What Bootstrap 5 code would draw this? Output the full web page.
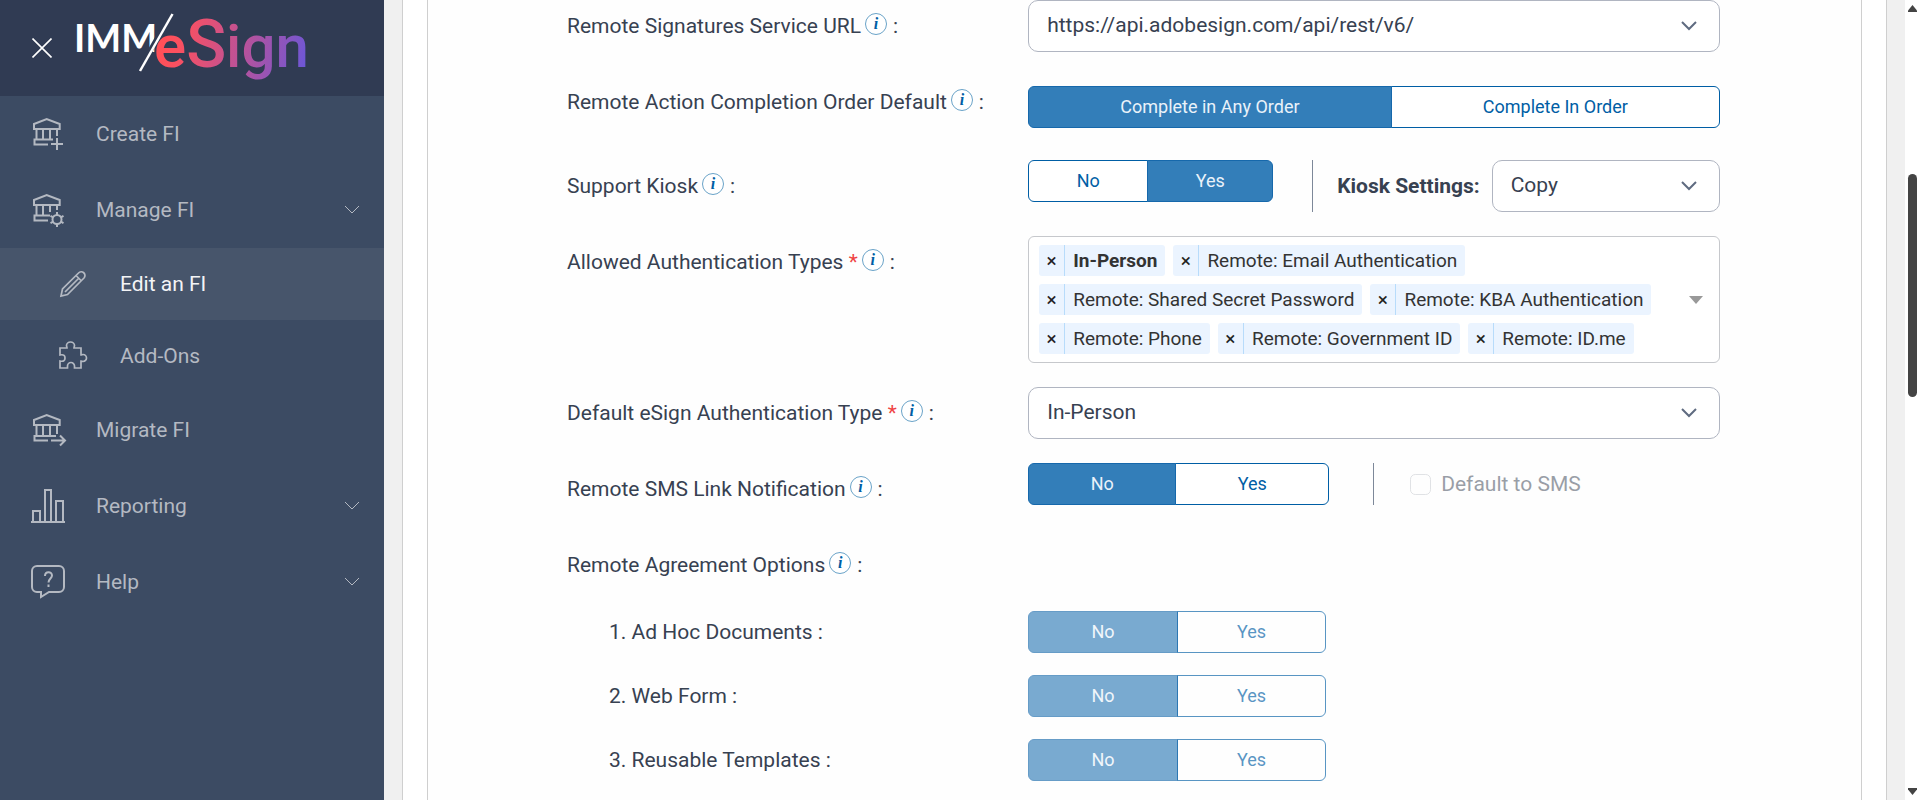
<!DOCTYPE html>
<html lang="en">
<head>
<meta charset="utf-8">
<meta name="viewport" content="width=device-width, initial-scale=1">
<title>IMM/eSign - Edit an FI</title>
<link href="https://cdn.jsdelivr.net/npm/bootstrap@5.3.0/dist/css/bootstrap.min.css" rel="stylesheet">
<style>
  :root { --ink: #374151; --brand: #337eb9; --brand-dark: #005ea5; }
  body { font-family: Roboto, "Liberation Sans", sans-serif; font-size: 21px; line-height: 30px; color: var(--ink); background: #f0f0f0; }

  /* sidebar */
  .side-panel { width: 20%; min-width: 320px; background: #3c4b63; }
  .side-head { height: 96px; background: #303b53; padding-left: 32px; }
  .close-btn { width: 20px; height: 20px; margin-right: 22px; }
  .side-link { height: 76px; padding: 0 24px 0 28px; color: #b4b9c2; text-decoration: none; }
  .side-link.sub-link { height: 72px; padding-left: 56px; }
  .side-link:hover, .side-link.active { color: #f3f4f6; }
  .side-link.active { background: #47556b; }
  .side-link > svg { flex: none; width: 40px; height: 40px; stroke: #b4b9c2; fill: none; stroke-width: 2; }
  .side-link > .nav-name { margin-left: 28px; }
  .side-link.sub-link > svg { width: 32px; height: 32px; }
  .side-link.sub-link > .nav-name { margin-left: 32px; }
  .side-link > svg.caret { width: 16px; height: 10px; margin-left: auto; stroke-width: 1; }

  /* page frames */
  .page-area { padding: 0 18px; min-width: 0; }
  .outer-frame { background: #fff; border: solid #cfcfcf; border-width: 0 1px; padding: 0 24px; }
  .inner-frame { background: #fefefe; border: solid #cfcfcf; border-width: 0 1px; padding: 0 141px 0 139px; }

  /* form rows */
  .form-rows { gap: 24px; }
  .name-col { width: 40%; padding-top: 11px; }
  .field-col { width: 60%; }
  .order-row { margin-bottom: 8px; }
  .order-row .field-col { padding-top: 10px; }
  .options-head { padding: 10px 0 6px; }
  .option-rows { gap: 22px; }
  .option-rows .name-col { padding: 0 0 0 42px; }
  .info-dot { width: 22px; height: 22px; margin: 0 6px 7px 4px; padding: 0; border: 1px solid #6aa3c8; border-radius: 50%; background: #fff; color: var(--brand-dark); font: italic bold 16px/18px "Liberation Serif", serif; vertical-align: middle; }
  .req { color: #ef4444; }

  .form-select { height: 52px; padding: 0 48px 0 18px; font-size: 21px; color: var(--ink); border-color: #b0b5c1; border-radius: 10px; background-color: #fff; background-image: url("data:image/svg+xml,%3Csvg xmlns='http://www.w3.org/2000/svg' viewBox='0 0 18 12'%3E%3Cpath d='M2 2l7 7 7-7' fill='none' stroke='%235f6b80' stroke-width='2'/%3E%3C/svg%3E"); background-size: 18px 12px; background-position: right 21px center; }
  .toggle { height: 42px; }
  .toggle .btn { --bs-btn-color: var(--brand-dark); --bs-btn-border-color: var(--brand-dark); --bs-btn-bg: #fff; --bs-btn-active-bg: var(--brand); --bs-btn-active-border-color: #1668ab; --bs-btn-active-color: #eaf2f9; --bs-btn-disabled-color: var(--brand-dark); --bs-btn-disabled-border-color: var(--brand-dark); --bs-btn-border-radius: 6px; font-size: 18px; line-height: 28px; padding: 6px 12px; }
  .w-kiosk { width: 245px; }
  .w-sms { width: 301px; }
  .w-option { width: 298px; }
  .w-option .btn { flex-basis: 0; }
  .w-option .btn-check:disabled + .btn { opacity: .65; }
  .split-rule { width: 1px; background: #7d8899; }
  .kiosk-rule { margin: 0 24px 0 39px; }
  .sms-rule { margin: 0 36px 0 44px; }

  .tag-box { position: relative; border: 1px solid #c6c8cc; border-radius: 6px; background: #fff; padding: 8px 60px 8px 10px; gap: 8px; }
  .tag { height: 31px; background: #ebf4ff; border-radius: 3px; font-size: 19px; line-height: 31px; color: #333; }
  .tag button { width: 26px; border: 0; border-right: 1px solid #b8dcfb; background: none; padding: 0; color: #222; }
  .tag span { padding: 0 8px; }
  .tag-arrow { position: absolute; right: 16px; top: 50%; margin-top: -4px; width: 14px; height: 8px; fill: #999; }

  .form-check-input { width: 21px; height: 21px; margin: 0 10px 0 0; border-color: #c4c7cd; }

  /* scroll strip */
  .scroll-strip { width: 15px; background: #fff; padding: 5px 0; }
  .scroll-thumb { width: 9px; height: 223px; margin-top: 162px; border-radius: 5px; background: #444; }
</style>
</head>
<body>
<div class="d-flex min-vh-100">

  <aside class="side-panel flex-shrink-0">
    <div class="side-head d-flex align-items-center">
      <button type="button" class="close-btn btn p-0 border-0 d-flex" aria-label="Close menu">
        <svg width="20" height="20" viewBox="0 0 20 20" stroke="#fff" stroke-width="1.6"><path d="M.5.5l19 19M19.5.5l-19 19"/></svg>
      </button>
      <svg width="260" height="96" viewBox="74 0 260 96" role="img" aria-label="IMM/eSign">
        <defs>
          <linearGradient id="brandFade" gradientUnits="userSpaceOnUse" x1="165" y1="30" x2="308" y2="64">
            <stop offset="0" stop-color="#ff5058"/><stop offset=".12" stop-color="#fb5060"/><stop offset=".55" stop-color="#b9529a"/><stop offset="1" stop-color="#6b57d8"/>
          </linearGradient>
        </defs>
        <text x="74" y="52" font-family="Lato, sans-serif" font-weight="700" font-size="38" fill="#fff">IMM</text>
        <text x="154" y="67" font-family="Roboto, sans-serif" font-weight="500" font-size="60" fill="url(#brandFade)">e<tspan font-size="66">S</tspan>ign</text>
        <path d="M171 14L138.500 71" stroke="#303b53" stroke-width="5"/>
        <path d="M172.500 14L140 71" stroke="#fff" stroke-width="2.500"/>
      </svg>
    </div>
    <nav aria-label="Main">
      <a href="#" class="side-link d-flex align-items-center">
        <svg viewBox="28 114 40 40"><path d="M34 129v-5l12.700-5 13 5v5zM36.500 129v10M43 129v10M50 129v10M57 129v7M53 139.500H34.500v5H48M57 138v12M51 144h12"/></svg>
        <span class="nav-name">Create FI</span>
      </a>
      <a href="#" class="side-link d-flex align-items-center">
        <svg viewBox="28 114 40 40"><path d="M34 129v-5l12.700-5 13 5v5zM36.500 129v10M43 129v10M50 129v7M57 129v5M50 139.500H34.500v5H48"/><circle cx="57" cy="143.500" r="4.500"/><path d="M57 139v-3M57 148v3M53.200 141.300l-2.700-1.500M60.800 141.300l2.700-1.500M53.200 145.700l-2.700 1.500M60.800 145.700l2.700 1.500"/></svg>
        <span class="nav-name">Manage FI</span>
        <svg class="caret" viewBox="0 0 16 10"><path d="M1 1l7 7 7-7"/></svg>
      </a>
      <a href="#" class="side-link sub-link active d-flex align-items-center" aria-current="page">
        <svg viewBox="0 0 32 32"><path stroke-width="1.700" d="M5 28l1.500-7L22.500 5a3.500 3.500 0 0 1 5.500 5L11.500 26.500zM20 7.500l5.500 5.500M23 10L9 24"/></svg>
        <span class="nav-name">Edit an FI</span>
      </a>
      <a href="#" class="side-link sub-link d-flex align-items-center">
        <svg viewBox="0 0 32 32"><path stroke-width="1.700" d="M4 8h7c0-1.500-.5-1.500-.5-2.500a4 3.500 0 0 1 8 0c0 1-.5 1-.5 2.500h7v7c1 0 1-.5 2-.5a3.500 3.500 0 0 1 0 7c-1 0-1-.5-2-.5v7h-6.500v-2a3.500 3.500 0 0 0-7 0v2H4v-7c4 1 5-1 5-3s-1-4-5-3z"/></svg>
        <span class="nav-name">Add-Ons</span>
      </a>
      <a href="#" class="side-link d-flex align-items-center">
        <svg viewBox="28 114 40 40"><path d="M34 129v-5l12.700-5 13 5v5zM36.500 129v10M43 129v10M50 129v10M57 129v9M56 140H34.500v4.500H48M51 144.500h14M60 139.500l5 5-5 5"/></svg>
        <span class="nav-name">Migrate FI</span>
      </a>
      <a href="#" class="side-link d-flex align-items-center">
        <svg viewBox="0 0 40 40"><path d="M3 36h34M5 36V25h7v11M17 36V4h6v32M28 36V15h7v21"/></svg>
        <span class="nav-name">Reporting</span>
        <svg class="caret" viewBox="0 0 16 10"><path d="M1 1l7 7 7-7"/></svg>
      </a>
      <a href="#" class="side-link d-flex align-items-center">
        <svg viewBox="0 0 40 40"><path d="M9 4h22a5 5 0 0 1 5 5v16a5 5 0 0 1-5 5H21l-8 5v-5H9a5 5 0 0 1-5-5V9a5 5 0 0 1 5-5zM17 14c0-5 7-5 7-.500 0 3-3.500 3-3.500 7M20.500 22.500v2.500"/></svg>
        <span class="nav-name">Help</span>
        <svg class="caret" viewBox="0 0 16 10"><path d="M1 1l7 7 7-7"/></svg>
      </a>
    </nav>
  </aside>

  <main class="page-area flex-grow-1 d-flex">
    <div class="outer-frame flex-grow-1 d-flex">
      <form class="inner-frame flex-grow-1">
        <div class="form-rows d-flex flex-column">

          <div class="d-flex">
            <div class="name-col"><label for="serviceUrl">Remote Signatures Service URL</label><button type="button" class="info-dot" aria-label="About the service URL">i</button>:</div>
            <div class="field-col"><select id="serviceUrl" class="form-select"><option>https://api.adobesign.com/api/rest/v6/</option></select></div>
          </div>

          <div class="d-flex order-row">
            <div class="name-col"><span id="orderName">Remote Action Completion Order Default</span><button type="button" class="info-dot" aria-label="About completion order">i</button>:</div>
            <div class="field-col">
              <div class="btn-group toggle w-100" role="group" aria-labelledby="orderName">
                <input type="radio" class="btn-check" name="order" id="orderAny" checked><label class="btn" for="orderAny">Complete in Any Order</label>
                <input type="radio" class="btn-check" name="order" id="orderIn"><label class="btn" for="orderIn">Complete In Order</label>
              </div>
            </div>
          </div>

          <div class="d-flex">
            <div class="name-col"><span id="kioskName">Support Kiosk</span><button type="button" class="info-dot" aria-label="About kiosk support">i</button>:</div>
            <div class="field-col d-flex">
              <div class="btn-group toggle w-kiosk flex-shrink-0" role="group" aria-labelledby="kioskName">
                <input type="radio" class="btn-check" name="kiosk" id="kioskNo"><label class="btn" for="kioskNo">No</label>
                <input type="radio" class="btn-check" name="kiosk" id="kioskYes" checked><label class="btn" for="kioskYes">Yes</label>
              </div>
              <div class="split-rule kiosk-rule flex-shrink-0"></div>
              <label for="kioskMode" class="fw-bold text-nowrap align-self-center me-2 pe-1">Kiosk Settings:</label>
              <select id="kioskMode" class="form-select"><option>Copy</option></select>
            </div>
          </div>

          <div class="d-flex">
            <div class="name-col"><span id="authName">Allowed Authentication Types <span class="req">*</span></span><button type="button" class="info-dot" aria-label="About authentication types">i</button>:</div>
            <div class="field-col">
              <div class="tag-box d-flex flex-wrap" role="group" aria-labelledby="authName">
                <div class="tag d-flex"><button type="button" aria-label="Remove In-Person">×</button><span class="fw-bold">In-Person</span></div>
                <div class="tag d-flex"><button type="button" aria-label="Remove Email Authentication">×</button><span>Remote: Email Authentication</span></div>
                <div class="tag d-flex"><button type="button" aria-label="Remove Shared Secret Password">×</button><span>Remote: Shared Secret Password</span></div>
                <div class="tag d-flex"><button type="button" aria-label="Remove KBA Authentication">×</button><span>Remote: KBA Authentication</span></div>
                <div class="tag d-flex"><button type="button" aria-label="Remove Phone">×</button><span>Remote: Phone</span></div>
                <div class="tag d-flex"><button type="button" aria-label="Remove Government ID">×</button><span>Remote: Government ID</span></div>
                <div class="tag d-flex"><button type="button" aria-label="Remove ID.me">×</button><span>Remote: ID.me</span></div>
                <svg class="tag-arrow" viewBox="0 0 14 8"><path d="M0 0h14L7 8z"/></svg>
              </div>
            </div>
          </div>

          <div class="d-flex">
            <div class="name-col"><label for="defaultAuth">Default eSign Authentication Type <span class="req">*</span></label><button type="button" class="info-dot" aria-label="About the default type">i</button>:</div>
            <div class="field-col"><select id="defaultAuth" class="form-select"><option>In-Person</option></select></div>
          </div>

          <div class="d-flex">
            <div class="name-col"><span id="smsName">Remote SMS Link Notification</span><button type="button" class="info-dot" aria-label="About SMS links">i</button>:</div>
            <div class="field-col d-flex">
              <div class="btn-group toggle w-sms flex-shrink-0" role="group" aria-labelledby="smsName">
                <input type="radio" class="btn-check" name="sms" id="smsNo" checked><label class="btn" for="smsNo">No</label>
                <input type="radio" class="btn-check" name="sms" id="smsYes"><label class="btn" for="smsYes">Yes</label>
              </div>
              <div class="split-rule sms-rule flex-shrink-0"></div>
              <div class="d-flex align-items-center">
                <input type="checkbox" class="form-check-input" id="smsDefault" disabled><label class="form-check-label opacity-50" for="smsDefault">Default to SMS</label>
              </div>
            </div>
          </div>

          <div class="options-head">
            <div class="name-col">Remote Agreement Options<button type="button" class="info-dot" aria-label="About agreement options">i</button>:</div>
          </div>
        </div>

        <div class="option-rows d-flex flex-column mt-4">
          <div class="d-flex align-items-center">
            <div class="name-col" id="adHocName">1. Ad Hoc Documents :</div>
            <div class="field-col d-flex"><div class="btn-group toggle w-option" role="group" aria-labelledby="adHocName">
              <input type="radio" class="btn-check" name="adhoc" id="adhocNo" checked disabled><label class="btn" for="adhocNo">No</label>
              <input type="radio" class="btn-check" name="adhoc" id="adhocYes" disabled><label class="btn" for="adhocYes">Yes</label>
            </div></div>
          </div>
          <div class="d-flex align-items-center">
            <div class="name-col" id="webFormName">2. Web Form :</div>
            <div class="field-col d-flex"><div class="btn-group toggle w-option" role="group" aria-labelledby="webFormName">
              <input type="radio" class="btn-check" name="webform" id="webformNo" checked disabled><label class="btn" for="webformNo">No</label>
              <input type="radio" class="btn-check" name="webform" id="webformYes" disabled><label class="btn" for="webformYes">Yes</label>
            </div></div>
          </div>
          <div class="d-flex align-items-center">
            <div class="name-col" id="reuseName">3. Reusable Templates :</div>
            <div class="field-col d-flex"><div class="btn-group toggle w-option" role="group" aria-labelledby="reuseName">
              <input type="radio" class="btn-check" name="reuse" id="reuseNo" checked disabled><label class="btn" for="reuseNo">No</label>
              <input type="radio" class="btn-check" name="reuse" id="reuseYes" disabled><label class="btn" for="reuseYes">Yes</label>
            </div></div>
          </div>
        </div>
      </form>
    </div>
  </main>

  <div class="scroll-strip flex-shrink-0 d-flex flex-column align-items-center" aria-hidden="true">
    <svg width="9" height="7" viewBox="0 0 9 7"><path d="M4.500 0L9 5.500V7H0V5.500z" fill="#444"/></svg>
    <div class="scroll-thumb"></div>
    <svg class="mt-auto" width="9" height="7" viewBox="0 0 9 7"><path d="M4.500 7L9 1.500V0H0v1.500z" fill="#444"/></svg>
  </div>
</div>
<script src="https://cdn.jsdelivr.net/npm/bootstrap@5.3.0/dist/js/bootstrap.bundle.min.js"></script>
</body>
</html>
